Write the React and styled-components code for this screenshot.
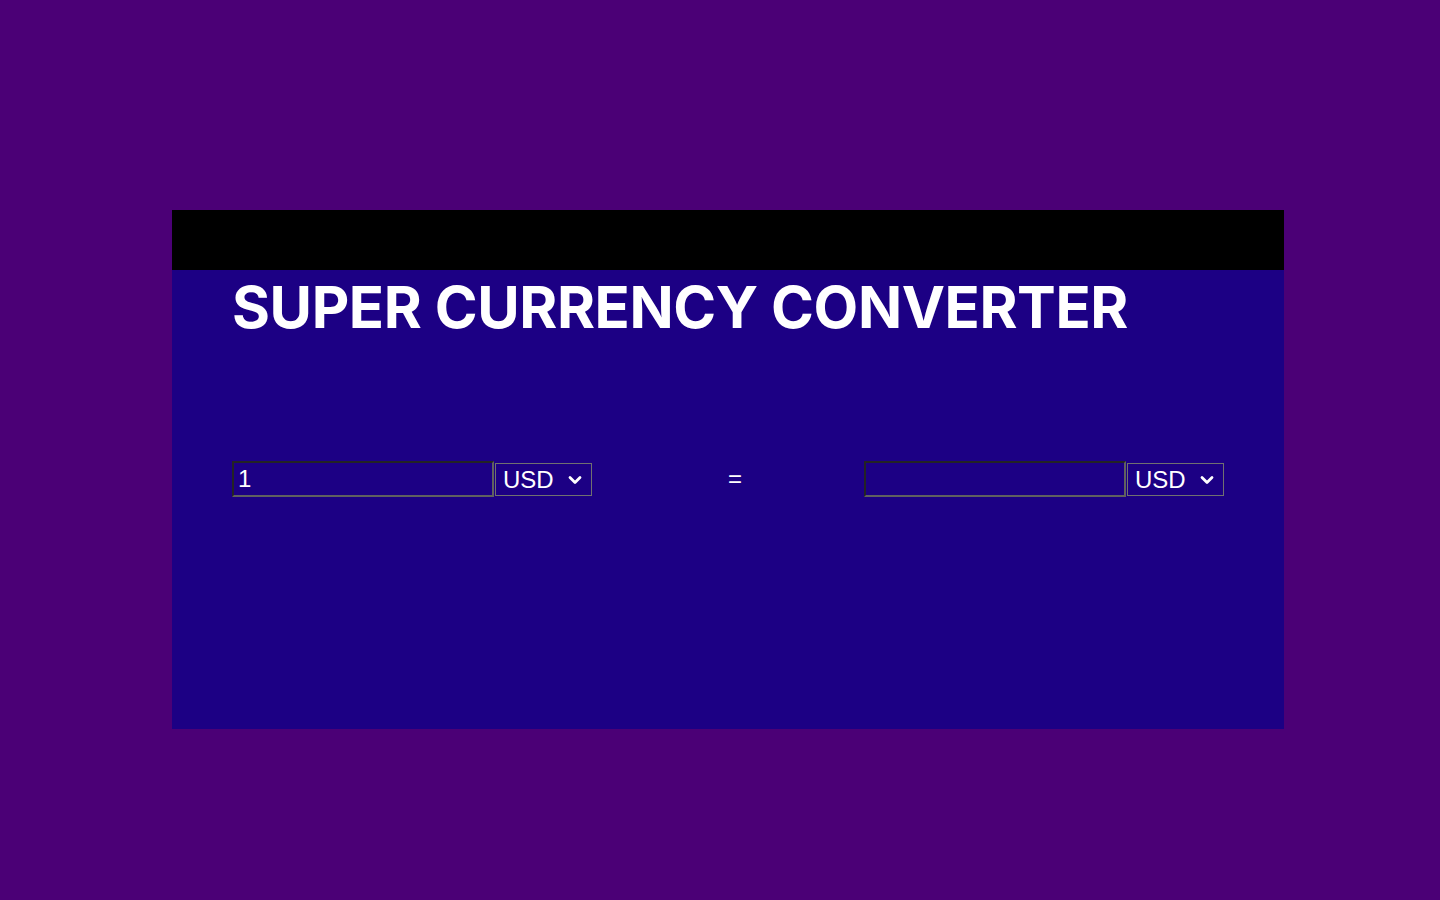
import React, { useState } from "react";
import styled, { createGlobalStyle } from "styled-components";

const Global = createGlobalStyle`
  html, body { margin: 0; padding: 0; }
  body {
    background: #4b0076;
    min-height: 900px;
    font-family: "Liberation Sans", Arial, sans-serif;
  }
`;

const Page = styled.div`
  width: 1440px;
  height: 900px;
  padding: 210px 156px 171px 172px;
  box-sizing: border-box;
`;

const Card = styled.section`
  width: 1112px;
  height: 519px;
  background: #1c0084;
  display: flex;
  flex-direction: column;
`;

const TopBar = styled.div`
  height: 60px;
  background: #000;
  flex: none;
`;

const Body = styled.div`
  padding: 0 60px;
  display: flex;
  flex-direction: column;
`;

const Title = styled.h1`
  margin: 5px 0 0;
  font-family: Inter, "Noto Sans", sans-serif;
  font-weight: 700;
  font-size: 58px;
  line-height: 64px;
  letter-spacing: -0.4px;
  color: #fff;
`;

const Row = styled.div`
  margin-top: 122px;
  display: flex;
  align-items: center;
  justify-content: space-between;
`;

const Group = styled.div`
  display: flex;
  align-items: center;
  width: 360px;
`;

const AmountInput = styled.input`
  width: 262px;
  height: 36px;
  box-sizing: border-box;
  background: transparent;
  color: #fff;
  font-family: "Liberation Sans", Arial, sans-serif;
  font-size: 24px;
  padding: 0 4px;
  border-style: solid;
  border-width: 2px;
  border-color: #242424 #606060 #606060 #242424;
  outline: none;
`;

const SelectWrap = styled.div`
  position: relative;
  margin-left: 1px;
  width: 98px;
  height: 33px;
`;

const CurrencySelect = styled.select`
  appearance: none;
  -webkit-appearance: none;
  width: 100%;
  height: 100%;
  box-sizing: border-box;
  background-color: #1c0084;
  color: #fff;
  font-family: "Liberation Sans", Arial, sans-serif;
  font-size: 24px;
  border: 1px solid #707070;
  border-radius: 0;
  padding: 0 0 0 7px;
  outline: none;
  option { color: #000; background: #fff; }
`;

const Chevron = styled.svg`
  position: absolute;
  right: 10px;
  top: 12px;
  width: 14px;
  height: 10px;
  pointer-events: none;
`;

const Equals = styled.span`
  color: #fff;
  font-family: "Liberation Sans", Arial, sans-serif;
  font-size: 24px;
  margin-left: 14px;
`;

function Currency() {
  return (
    <SelectWrap>
      <CurrencySelect defaultValue="USD">
        <option>USD</option>
        <option>EUR</option>
        <option>GBP</option>
      </CurrencySelect>
      <Chevron viewBox="0 0 14 10">
        <path d="M2 2.5 L7 7.5 L12 2.5" fill="none" stroke="#fff" strokeWidth="2.8" strokeLinecap="round" strokeLinejoin="round" />
      </Chevron>
    </SelectWrap>
  );
}

export default function App() {
  const [amount, setAmount] = useState("1");
  return (
    <>
      <Global />
      <Page>
        <Card>
          <TopBar />
          <Body>
            <Title>SUPER CURRENCY CONVERTER</Title>
            <Row>
              <Group>
                <AmountInput value={amount} onChange={(e) => setAmount(e.target.value)} />
                <Currency />
              </Group>
              <Equals>=</Equals>
              <Group>
                <AmountInput readOnly value="" />
                <Currency />
              </Group>
            </Row>
          </Body>
        </Card>
      </Page>
    </>
  );
}
